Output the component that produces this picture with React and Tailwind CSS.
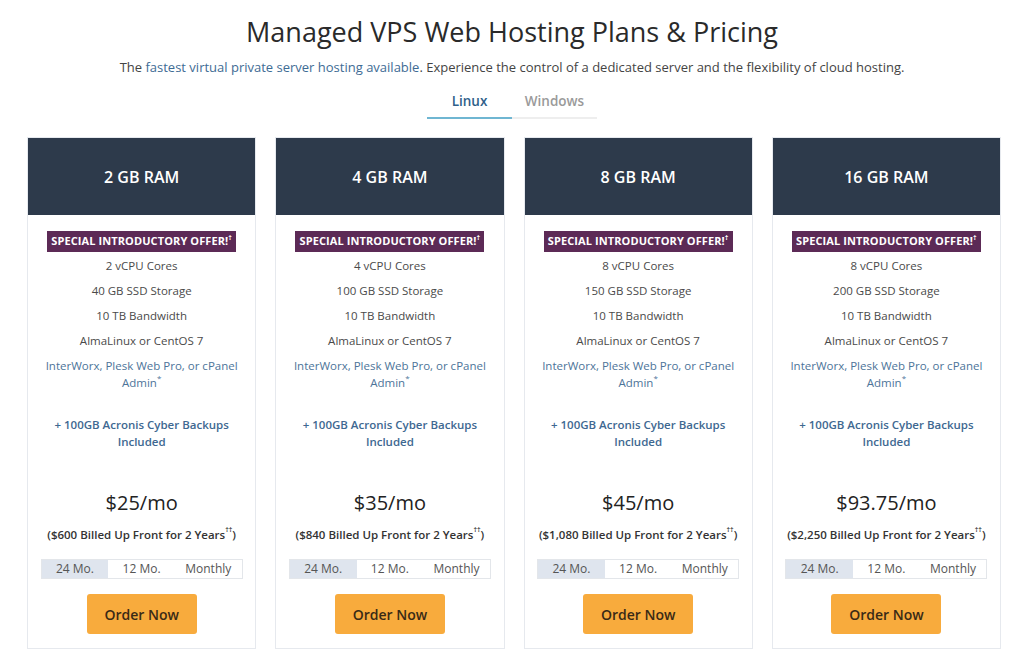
import React, { useState } from 'react';

const plans = [
    { ram: '2 GB RAM', cpu: '2 vCPU Cores', ssd: '40 GB SSD Storage', price: '$25/mo', billed: '$600' },
    { ram: '4 GB RAM', cpu: '4 vCPU Cores', ssd: '100 GB SSD Storage', price: '$35/mo', billed: '$840' },
    { ram: '8 GB RAM', cpu: '8 vCPU Cores', ssd: '150 GB SSD Storage', price: '$45/mo', billed: '$1,080' },
    { ram: '16 GB RAM', cpu: '8 vCPU Cores', ssd: '200 GB SSD Storage', price: '$93.75/mo', billed: '$2,250' },
];

const terms = ['24 Mo.', '12 Mo.', 'Monthly'];

const PlanCard = ({ plan }) => {
    const [term, setTerm] = useState(0);

    return (
        <div className="bg-white border border-[#e6e9ee] flex flex-col items-center text-center pb-[14px]">
            <div className="w-full h-[77px] bg-[#2d3a4b] flex items-center justify-center text-white text-[16px] font-semibold">
                {plan.ram}
            </div>

            <div className="mt-[16px] h-[21px] px-[4px] bg-[#5c2a56] text-white text-[11px] font-bold flex items-center tracking-[0.1px]">
                SPECIAL INTRODUCTORY OFFER!<span className="text-[7px] leading-none self-start mt-[3px]">†</span>
            </div>

            <div className="mt-[1px] w-full px-[12px] text-[11.5px] text-[#4a4a4a]">
                <div className="leading-[25px]">{plan.cpu}</div>
                <div className="leading-[25px]">{plan.ssd}</div>
                <div className="leading-[25px]">10 TB Bandwidth</div>
                <div className="leading-[25px]">AlmaLinux or CentOS 7</div>
                <div className="mt-[4px] leading-[17px] text-[#4d7499]">
                    InterWorx, Plesk Web Pro, or cPanel Admin<span className="text-[8px] leading-none align-top">*</span>
                </div>
                <div className="mt-[25px] leading-[17px] px-[14px] font-semibold text-[#3e6891]">
                    + 100GB Acronis Cyber Backups Included
                </div>
            </div>

            <div className="mt-[39px] text-[20px] leading-[28px] text-[#222] font-medium">{plan.price}</div>
            <div className="mt-[9px] text-[11.5px] leading-[17px] font-semibold text-[#333]">
                ({plan.billed} Billed Up Front for 2 Years<span className="text-[7px] leading-none align-top">††</span>)
            </div>

            <div className="mt-[16px] w-[202px] h-[20px] grid grid-cols-3 border border-[#e3e6ea] text-[12px] text-[#555]">
                {terms.map((t, i) => (
                    <button
                        key={t}
                        onClick={() => setTerm(i)}
                        className={`flex items-center justify-center ${term === i ? 'bg-[#dfe5ee]' : 'bg-white'}`}
                    >
                        {t}
                    </button>
                ))}
            </div>

            <button className="mt-[15px] w-[110px] h-[40px] rounded-[3px] bg-[#f8ab3d] text-[14px] font-semibold text-[#3a2a16]">
                Order Now
            </button>
        </div>
    );
};

const App = () => {
    const [tab, setTab] = useState('Linux');

    return (
        <div className="min-h-screen bg-white" style={{ fontFamily: '"Open Sans", "Noto Sans", sans-serif' }}>
            <h1 className="pt-[13px] text-center text-[27px] leading-[37px] text-[#2a2a2a] font-medium">
                Managed VPS Web Hosting Plans &amp; Pricing
            </h1>
            <p className="mt-[7px] text-center text-[13px] leading-[20px] text-[#444]">
                The <span className="text-[#3e6b94]">fastest virtual private server hosting available</span>. Experience the control of a dedicated server and the flexibility of cloud hosting.
            </p>

            <div className="mt-[14px] flex justify-center">
                <div className="flex">
                    {['Linux', 'Windows'].map(t => (
                        <button
                            key={t}
                            onClick={() => setTab(t)}
                            className={`w-[85px] h-[28px] flex items-start justify-center text-[13.5px] leading-[20px] font-semibold border-b-2 ${tab === t ? 'text-[#2f5f8a] border-[#6fb6d2]' : 'text-[#9a9a9a] border-[#eeeeee]'}`}
                        >
                            {t}
                        </button>
                    ))}
                </div>
            </div>

            <div className="mt-[18px] ml-[27px] w-[974px] grid grid-cols-4 gap-[19px]">
                {plans.map(p => <PlanCard key={p.ram} plan={p} />)}
            </div>
        </div>
    );
};

export default App;
